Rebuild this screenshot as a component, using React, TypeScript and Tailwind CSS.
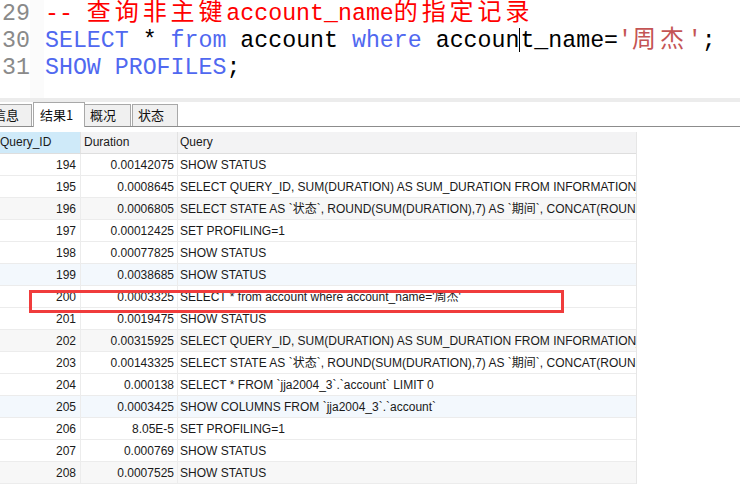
import React from "react";

type Row = {
  id: number;
  duration: string;
  query: string;
  bg?: string;
};

const rows: Row[] = [
  { id: 194, duration: "0.00142075", query: "SHOW STATUS" },
  { id: 195, duration: "0.0008645", query: "SELECT QUERY_ID, SUM(DURATION) AS SUM_DURATION FROM INFORMATION_SCHEMA.PROFILING GROUP BY QUERY_ID" },
  { id: 196, duration: "0.0006805", query: "SELECT STATE AS `状态`, ROUND(SUM(DURATION),7) AS `期间`, CONCAT(ROUND(SUM(DURATION)/0.000138*100,3), '%')", bg: "bg-[#f7f7f7]" },
  { id: 197, duration: "0.00012425", query: "SET PROFILING=1" },
  { id: 198, duration: "0.00077825", query: "SHOW STATUS" },
  { id: 199, duration: "0.0038685", query: "SHOW STATUS", bg: "bg-[#f3f8fd]" },
  { id: 200, duration: "0.0003325", query: "SELECT * from account where account_name='周杰'" },
  { id: 201, duration: "0.0019475", query: "SHOW STATUS" },
  { id: 202, duration: "0.00315925", query: "SELECT QUERY_ID, SUM(DURATION) AS SUM_DURATION FROM INFORMATION_SCHEMA.PROFILING GROUP BY QUERY_ID", bg: "bg-[#f7f7f7]" },
  { id: 203, duration: "0.00143325", query: "SELECT STATE AS `状态`, ROUND(SUM(DURATION),7) AS `期间`, CONCAT(ROUND(SUM(DURATION)/0.000138*100,3), '%')" },
  { id: 204, duration: "0.000138", query: "SELECT * FROM `jja2004_3`.`account` LIMIT 0" },
  { id: 205, duration: "0.0003425", query: "SHOW COLUMNS FROM `jja2004_3`.`account`", bg: "bg-[#f3f8fd]" },
  { id: 206, duration: "8.05E-5", query: "SET PROFILING=1" },
  { id: 207, duration: "0.000769", query: "SHOW STATUS" },
  { id: 208, duration: "0.0007525", query: "SHOW STATUS", bg: "bg-[#f7f7f7]" },
];

// CJK glyphs take two columns in the editor
function Wide({ children }: { children: string }) {
  return (
    <span className="font-['Noto_Sans_CJK_SC',sans-serif] text-[24px] leading-[0px] tracking-[3.9px]">
      {children}
    </span>
  );
}

const kw = "text-[#5068f0]";

export default function App() {
  return (
    <div className="w-[740px] h-[502px] bg-white overflow-hidden relative">
      {/* editor */}
      <div className="h-[98px] flex font-['Liberation_Mono',monospace] text-[23.25px] leading-[27px]">
        <div className="w-[30px] text-[#8a8a8a] pl-[2px] pt-[1px]">
          <div className="h-[27px]">29</div>
          <div className="h-[27px]">30</div>
          <div className="h-[27px]">31</div>
        </div>
        <div className="w-[14px] bg-[#fbfbfb]" />
        <div className="pl-[1px] pt-[1px] whitespace-pre text-black">
          <div className="h-[27px] text-[#ff0000]">
            -- <Wide>查询非主键</Wide>account_name<Wide>的指定记录</Wide>
          </div>
          <div className="h-[27px]">
            <span className={kw}>SELECT</span> * <span className={kw}>from</span> account{" "}
            <span className={kw}>where</span> accoun
            <span className="inline-block w-0 h-[24px] border-l border-black align-[-5px]" />
            t_name=<span className="text-[#c45454]">'<Wide>周杰</Wide>'</span>;
          </div>
          <div className="h-[27px]">
            <span className={kw}>SHOW PROFILES</span>;
          </div>
        </div>
      </div>

      {/* splitter */}
      <div className="h-[4px] bg-[#ececec]" />

      {/* tabs */}
      <div className="h-[25px] flex items-end border-b border-[#8c8c8c] font-['Noto_Sans_CJK_SC',sans-serif] text-[13px] text-[#111]">
        <div className="w-[46px] -ml-[14px] h-[22px] bg-[#f0f0f0] border border-b-0 border-[#a8a8a8] pl-[6px] leading-[20px]">
          信息
        </div>
        <div className="w-[52px] ml-[1px] h-[25px] -mb-[1px] bg-white border border-b-0 border-[#a8a8a8] pl-[6px] leading-[24px] relative z-10">
          结果1
        </div>
        <div className="w-[46px] h-[22px] bg-[#f0f0f0] border border-b-0 border-l-0 border-[#a8a8a8] pl-[5px] leading-[20px]">
          概况
        </div>
        <div className="w-[46px] ml-[1px] h-[22px] bg-[#f0f0f0] border border-b-0 border-[#a8a8a8] pl-[5px] leading-[20px]">
          状态
        </div>
      </div>

      {/* result grid */}
      <div className="relative mt-[5px] w-[637px] border-r border-[#e6e6e6] font-['Liberation_Sans','Noto_Sans_CJK_SC',sans-serif] text-[12px] text-[#1a1a1a]">
        <div className="flex h-[22px] leading-[21px] bg-[#f3f3f4] border-b border-[#dedede]">
          <div className="w-[81px] bg-[#cfeaf9] border-r border-[#e2e2e2]">Query_ID</div>
          <div className="w-[97px] pl-[3px] border-r border-[#e2e2e2]">Duration</div>
          <div className="flex-1 pl-[2px]">Query</div>
        </div>
        {rows.map((r) => (
          <div key={r.id} className={`flex h-[22px] leading-[22px] border-b border-[#ececec] ${r.bg ?? "bg-white"}`}>
            <div className="w-[81px] pr-[4px] text-right border-r border-[#ececec]">{r.id}</div>
            <div className="w-[97px] pr-[3px] text-right border-r border-[#ececec]">{r.duration}</div>
            <div className="flex-1 pl-[2px] whitespace-nowrap overflow-hidden">{r.query}</div>
          </div>
        ))}

        {/* annotation box */}
        <div className="absolute left-[29px] top-[158px] w-[535px] h-[23px] border-[3px] border-[#f03c3c] pointer-events-none" />
      </div>
    </div>
  );
}
